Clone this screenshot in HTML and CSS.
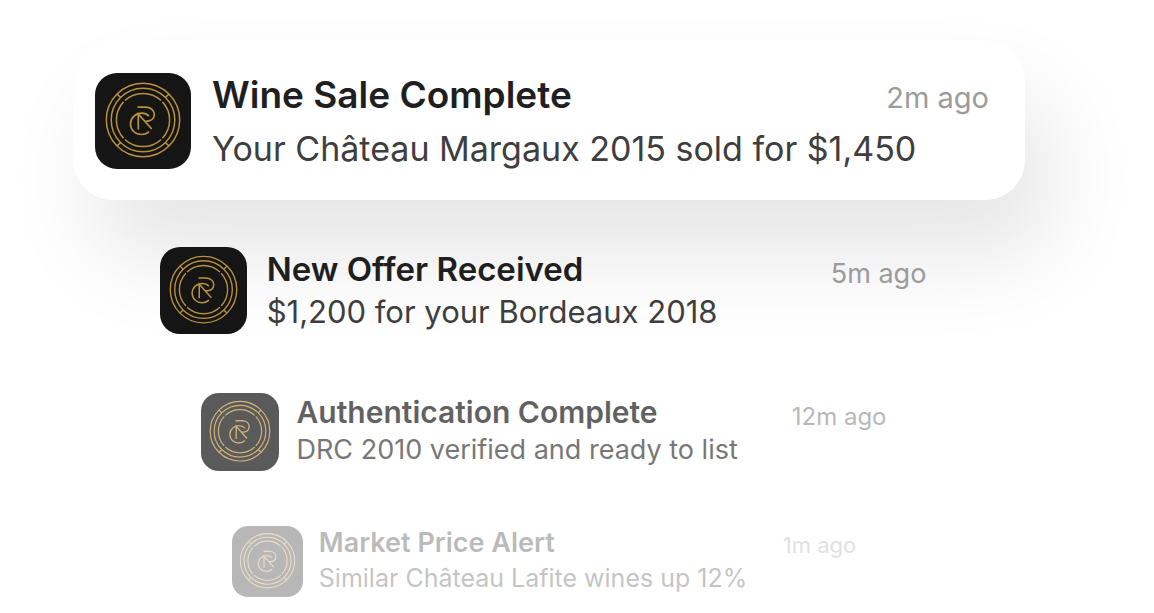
FILE: index.html
```
<!DOCTYPE html>
<html lang="en">
<head>
<meta charset="utf-8">
<meta name="viewport" content="width=device-width, initial-scale=1">
<title>Notifications</title>
<link rel="stylesheet" href="styles.css">
</head>
<body>
<svg class="sprite" aria-hidden="true">
  <symbol id="logo" viewBox="0 0 96 96">
    <g fill="none" stroke="#b8913f" stroke-width="1.5">
      <circle cx="48" cy="47" r="36.7"/>
      <circle cx="48" cy="47" r="31.8"/>
      <circle cx="48" cy="47" r="26.6" pathLength="360" stroke-dasharray="86 4" stroke-dashoffset="-47"/>
      <path d="M22.1 21.1L25.6 24.5M73.900 21.1L70.4 24.5M22.1 72.9L25.6 69.5M73.9 72.9L70.4 69.5"/>
      <path stroke-width="1.7" d="M42.5 34.2H50.5C56 34.2 59.300 37.5 59.300 41.6C59.300 46 55.5 48.3 50.500 48.3M54 43.2C52.2 41.2 49.8 40.2 46.800 40.200C40.300 40.200 35.500 45 35.500 51C35.500 57 40.300 61.500 46.500 61.500C49.500 61.500 52.2 60.500 54 58.5M43.300 56.500V41L56.700 56"/>
    </g>
  </symbol>
</svg>
<main class="stack">
  <article class="note note-1">
    <svg class="icon" role="img" aria-label="App logo"><use href="#logo"/></svg>
    <div class="text">
      <h2 class="title">Wine Sale Complete</h2>
      <p class="message">Your Château Margaux 2015 sold for $1,450</p>
    </div>
    <time class="time">2m ago</time>
  </article>
  <article class="note note-2">
    <svg class="icon" role="img" aria-label="App logo"><use href="#logo"/></svg>
    <div class="text">
      <h2 class="title">New Offer Received</h2>
      <p class="message">$1,200 for your Bordeaux 2018</p>
    </div>
    <time class="time">5m ago</time>
  </article>
  <article class="note note-3">
    <svg class="icon" role="img" aria-label="App logo"><use href="#logo"/></svg>
    <div class="text">
      <h2 class="title">Authentication Complete</h2>
      <p class="message">DRC 2010 verified and ready to list</p>
    </div>
    <time class="time">12m ago</time>
  </article>
  <article class="note note-4">
    <svg class="icon" role="img" aria-label="App logo"><use href="#logo"/></svg>
    <div class="text">
      <h2 class="title">Market Price Alert</h2>
      <p class="message">Similar Château Lafite wines up 12%</p>
    </div>
    <time class="time">1m ago</time>
  </article>
</main>
</body>
</html>
```
FILE: styles.css
```
* { box-sizing: border-box; }
body {
  margin: 0;
  background: #fff;
  color: #1f1f1f;
  font-family: Inter, "Liberation Sans", sans-serif;
}
.sprite { display: block; width: 0; height: 0; }
.stack {
  display: flex;
  flex-direction: column;
  align-items: center;
  padding: 41px 129px 16px 73px;
}
.note { display: flex; align-items: flex-start; }
.icon { flex: none; background: #151515; }
.text { flex: 1; min-width: 0; }
.title, .message { margin: 0; white-space: nowrap; }
.title { font-weight: 600; }
.message { font-weight: 400; color: #3e3e3e; }
.time { flex: none; color: #9b9b9b; }

.note-1 {
  width: 100%;
  gap: 21px;
  padding: 32px 36px 31px 22px;
  border-radius: 40px;
  background: #fff;
  box-shadow: 24px 56px 90px rgba(0, 0, 0, 0.1);
}
.note-1 .icon { width: 96px; height: 96px; border-radius: 22px; }
.note-1 .title { font-size: 37px; line-height: 44px; }
.note-1 .message { margin-top: 12px; font-size: 34px; line-height: 40px; }
.note-1 .time { font-size: 29px; line-height: 50px; }

.note-2 {
  width: 86%;
  gap: 20px;
  margin-top: 47px;
  padding: 0 32px 0 20px;
}
.note-2 .icon { width: 87px; height: 87px; border-radius: 20px; }
.note-2 .title { font-size: 33px; line-height: 44px; }
.note-2 .message { font-size: 31px; line-height: 42px; }
.note-2 .time { font-size: 27px; line-height: 54px; }

.note-3 {
  width: 77%;
  gap: 17px;
  margin-top: 59px;
  padding: 0 29px 0 19px;
  opacity: 0.7;
}
.note-3 .icon { width: 78px; height: 78px; border-radius: 18px; }
.note-3 .title { font-size: 30px; line-height: 38px; }
.note-3 .message { font-size: 27px; line-height: 38px; }
.note-3 .time { font-size: 24px; line-height: 47px; }

.note-4 {
  width: 70%;
  gap: 16px;
  margin-top: 55px;
  padding: 0 26px 0 16px;
  opacity: 0.3;
}
.note-4 .icon { width: 71px; height: 71px; border-radius: 16px; }
.note-4 .title { font-size: 27px; line-height: 34px; }
.note-4 .message { font-size: 25px; line-height: 37px; }
.note-4 .time { font-size: 22px; line-height: 38px; }
```
